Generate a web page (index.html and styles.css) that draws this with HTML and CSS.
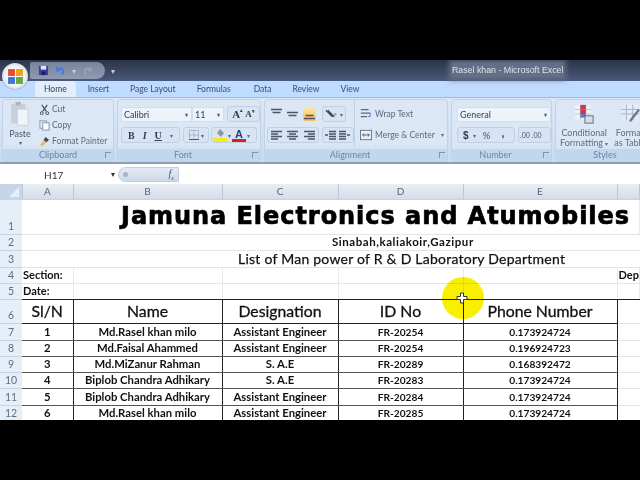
FILE: index.html
```html
<!DOCTYPE html>
<html lang="en">
<head>
    <meta charset="UTF-8">
    <title>Rasel khan - Microsoft Excel</title>
    <link rel="stylesheet" href="styles.css">
</head>
<body>
    <div class="window">
        <!-- title bar -->
        <div class="titlebar">
            <div class="qat">
                <svg class="qat-icon" viewBox="0 0 12 12"><rect x="1" y="1" width="10" height="10" fill="#3a3f9e"/><rect x="3" y="1" width="6" height="4" fill="#e4e8f6"/><rect x="4" y="7" width="4" height="4" fill="#1d2060"/></svg>
                <svg class="qat-icon" viewBox="0 0 12 12"><path d="M2 2v4h4M2 6c2-3 7-3 7 1 0 2-1 3-2 3" fill="none" stroke="#4a78e0" stroke-width="2"/></svg>
                <span class="qat-drop">&#9662;</span>
                <svg class="qat-icon" viewBox="0 0 12 12"><path d="M10 2v4H6M10 6C8 3 3 3 3 7c0 2 1 3 2 3" fill="none" stroke="#9aa4b4" stroke-width="1.5"/></svg>
            </div>
            <span class="qat-more">&#9662;</span>
            <div class="title">Rasel khan - Microsoft Excel</div>
        </div>
        <div class="office-btn">
            <svg viewBox="0 0 16 16" width="17" height="17">
                <rect x="1" y="1" width="6.5" height="6.5" fill="#e2522a"/>
                <rect x="8.5" y="1" width="6.5" height="6.5" fill="#f2a01e"/>
                <rect x="1" y="8.5" width="6.5" height="6.5" fill="#3b78d8"/>
                <rect x="8.5" y="8.5" width="6.5" height="6.5" fill="#6aa83a"/>
            </svg>
        </div>

        <!-- tabs -->
        <div class="tabs">
            <span class="tab active">Home</span>
            <span class="tab">Insert</span>
            <span class="tab">Page Layout</span>
            <span class="tab">Formulas</span>
            <span class="tab">Data</span>
            <span class="tab">Review</span>
            <span class="tab">View</span>
        </div>

        <!-- ribbon -->
        <div class="ribbon">
            <section class="group g-clipboard">
                <div class="group-body clip">
                    <div class="paste">
                        <svg viewBox="0 0 24 30" width="22" height="27"><rect x="2" y="3" width="16" height="22" rx="1" fill="#c9ced6"/><rect x="7" y="1" width="6" height="4" fill="#aab0ba"/><path d="M9 9h12v18H9z" fill="#f4f6fa" stroke="#c6ccd6"/></svg>
                        <span>Paste</span>
                        <span class="caret">&#9662;</span>
                    </div>
                    <div class="clip-list">
                        <div class="clip-row"><svg viewBox="0 0 12 12" width="11" height="11"><path d="M3 1l5 7M9 1L4 8" stroke="#445" stroke-width="1.2"/><circle cx="3" cy="10" r="1.6" fill="none" stroke="#445"/><circle cx="9" cy="10" r="1.6" fill="none" stroke="#445"/></svg>Cut</div>
                        <div class="clip-row"><svg viewBox="0 0 12 12" width="11" height="11"><rect x="1" y="1" width="7" height="8" fill="#eef2f8" stroke="#7f93b0"/><rect x="4" y="3" width="7" height="8" fill="#f8fafc" stroke="#7f93b0"/></svg>Copy</div>
                        <div class="clip-row"><svg viewBox="0 0 12 12" width="11" height="11"><path d="M7 1l4 3-3 3-3-3z" fill="#4a4a52"/><path d="M5 5l3 2-4 4-3-1z" fill="#e6c04a"/></svg>Format Painter</div>
                    </div>
                </div>
                <div class="group-label">Clipboard<i class="launcher"></i></div>
            </section>

            <section class="group g-font">
                <div class="group-body stack">
                    <div class="line">
                        <span class="combo font-name">Calibri<b>&#9662;</b></span>
                        <span class="combo font-size">11<b>&#9662;</b></span>
                        <span class="btns grow-btns"><em class="big">A<sup>&#9652;</sup></em><em class="small">A<sup>&#9662;</sup></em></span>
                    </div>
                    <div class="line">
                        <span class="btns style-btns"><em class="b">B</em><em class="i">I</em><em class="u">U</em><small>&#9662;</small></span>
                        <span class="btns border-btn"><svg viewBox="0 0 10 10" width="10" height="10"><path d="M.5.5h9v9h-9zM5 .5v9M.5 5h9" fill="none" stroke="#8b97a8" stroke-dasharray="1 1"/><path d="M0 9.5h10" stroke="#556"/></svg><small>&#9662;</small></span>
                        <span class="btns color-btns">
                            <span class="swatch fill"><svg viewBox="0 0 12 9" width="12" height="9"><path d="M6 0l4 4-3 4-4-4z" fill="#8d97a6"/></svg></span><small>&#9662;</small>
                            <span class="swatch text"><span>A</span></span><small>&#9662;</small>
                        </span>
                    </div>
                </div>
                <div class="group-label">Font<i class="launcher"></i></div>
            </section>

            <section class="group g-align">
                <div class="group-body align">
                    <div class="stack">
                        <div class="line">
                            <span class="btns icon-btns plain">
                                <em><svg class="ico" viewBox="0 0 11 12"><path d="M0 1.5h11M1.5 4.5h8"/></svg></em>
                                <em><svg class="ico" viewBox="0 0 11 12"><path d="M0 4.5h11M1.5 7.5h8"/></svg></em>
                                <em class="on"><svg class="ico" viewBox="0 0 11 12"><path d="M1.5 7.5h8M0 10.5h11"/></svg></em>
                            </span>
                            <span class="btns orient"><svg viewBox="0 0 14 10" width="14" height="10"><path d="M1 1l7 7M3 1l7 7" stroke="#444c5a" stroke-width="1.4"/><path d="M10 4l3 1-3 2" fill="#7f8aa0"/></svg><small>&#9662;</small></span>
                        </div>
                        <div class="line">
                            <span class="btns icon-btns">
                                <em><svg class="ico" viewBox="0 0 11 12"><path d="M0 2.5h11M0 5h7M0 7.5h11M0 10h7"/></svg></em>
                                <em><svg class="ico" viewBox="0 0 11 12"><path d="M0 2.5h11M2 5h7M0 7.5h11M2 10h7"/></svg></em>
                                <em><svg class="ico" viewBox="0 0 11 12"><path d="M0 2.5h11M4 5h7M0 7.5h11M4 10h7"/></svg></em>
                            </span>
                            <span class="btns indent">
                                <em><svg class="ico" viewBox="0 0 11 12"><path d="M4 2.5h7M4 5h7M4 7.5h7M4 10h7M3 6H0"/></svg></em>
                                <em><svg class="ico" viewBox="0 0 11 12"><path d="M0 2.5h7M0 5h7M0 7.5h7M0 10h7M8 6h3"/></svg></em>
                            </span>
                        </div>
                    </div>
                    <div class="wrap-list">
                        <div class="wrap-row"><svg viewBox="0 0 14 12" width="12" height="12"><path d="M1 1h9M1 5h11M1 9h7" stroke="#5d6878" stroke-width="1.5"/><path d="M12 5v4H9" fill="none" stroke="#4a78c0"/></svg>Wrap Text</div>
                        <div class="wrap-row"><svg viewBox="0 0 14 12" width="12" height="12"><rect x=".5" y=".5" width="13" height="11" fill="#eef2f8" stroke="#5d6878"/><path d="M3 6h8M5 4L3 6l2 2M9 4l2 2-2 2" fill="none" stroke="#33507a"/></svg>Merge &amp; Center<small>&#9662;</small></div>
                    </div>
                </div>
                <div class="group-label">Alignment<i class="launcher"></i></div>
            </section>

            <section class="group g-number">
                <div class="group-body stack">
                    <div class="line"><span class="combo general">General<b>&#9662;</b></span></div>
                    <div class="line">
                        <span class="btns num-btns"><em class="dollar">$</em><small>&#9662;</small><em class="pct">%</em><em class="comma">,</em></span>
                        <span class="btns dec-btns"><em>.00</em><em>.00</em></span>
                    </div>
                </div>
                <div class="group-label">Number<i class="launcher"></i></div>
            </section>

            <section class="group g-styles">
                <div class="group-body styles">
                    <div class="style-item">
                        <svg viewBox="0 0 22 22" width="22" height="20"><rect x="1" y="1" width="18" height="16" fill="#eef2f8"/><path d="M1 6h18M1 11h18M7 1v16M13 1v16" stroke="#b6c3d6"/><rect x="7" y="1" width="6" height="5" fill="#d0344a"/><rect x="7" y="6" width="6" height="5" fill="#d0344a"/><rect x="7" y="11" width="6" height="4" fill="#5a78c8"/><rect x="12" y="13" width="9" height="8" fill="#d8dee8" stroke="#5b6675"/></svg>
                        <span>Conditional<br>Formatting <small>&#9662;</small></span>
                    </div>
                    <div class="style-item">
                        <svg viewBox="0 0 22 22" width="22" height="20"><rect x="1" y="1" width="20" height="17" fill="#e4ebf6"/><path d="M1 6h20M1 11h20M7 1v17M14 1v17" stroke="#9fb2d2"/><path d="M21 6L11 19" stroke="#6d7786" stroke-width="2.5"/></svg>
                        <span>Format<br>as Table</span>
                    </div>
                </div>
                <div class="group-label">Styles</div>
            </section>
        </div>

        <!-- formula bar -->
        <div class="formula-bar">
            <div class="name-box">H17<span>&#9662;</span></div>
            <div class="fx"><i></i><span>f<sub>x</sub></span></div>
            <div class="formula-input"></div>
        </div>

        <!-- sheet -->
        <table class="sheet">
            <colgroup>
                <col class="c-row"><col class="c-a"><col class="c-b"><col class="c-c"><col class="c-d"><col class="c-e"><col class="c-f">
            </colgroup>
            <tr class="r-head">
                <th class="corner"><i></i></th><th>A</th><th>B</th><th>C</th><th>D</th><th>E</th><th></th>
            </tr>
            <tr class="r-title">
                <th class="low">1</th><td colspan="6" class="title-cell">Jamuna Electronics and Atumobiles</td>
            </tr>
            <tr class="r-16">
                <th>2</th><td colspan="6" class="sub-cell">Sinabah,kaliakoir,Gazipur</td>
            </tr>
            <tr class="r-17">
                <th>3</th><td colspan="6" class="list-cell">List of Man power of R &amp; D Laboratory Department</td>
            </tr>
            <tr class="r-16">
                <th>4</th><td class="label">Section:</td><td></td><td></td><td></td><td></td><td class="label">Dep</td>
            </tr>
            <tr class="r-16 r-before-head">
                <th>5</th><td class="label">Date:</td><td></td><td></td><td></td><td></td><td></td>
            </tr>
            <tr class="r-columns">
                <th class="low">6</th><td>Sl/N</td><td>Name</td><td>Designation</td><td>ID No</td><td>Phone Number</td><td></td>
            </tr>
            <tr class="r-data r-17"><th>7</th><td>1</td><td>Md.Rasel khan milo</td><td>Assistant Engineer</td><td>FR-20254</td><td>0.173924724</td><td></td></tr>
            <tr class="r-data r-16"><th>8</th><td>2</td><td>Md.Faisal Ahammed</td><td>Assistant Engineer</td><td>FR-20254</td><td>0.196924723</td><td></td></tr>
            <tr class="r-data r-16"><th>9</th><td>3</td><td>Md.MiZanur Rahman</td><td>S. A.E</td><td>FR-20289</td><td>0.168392472</td><td></td></tr>
            <tr class="r-data r-16"><th>10</th><td>4</td><td>Biplob Chandra Adhikary</td><td>S. A.E</td><td>FR-20283</td><td>0.173924724</td><td></td></tr>
            <tr class="r-data r-17"><th>11</th><td>5</td><td>Biplob Chandra Adhikary</td><td>Assistant Engineer</td><td>FR-20284</td><td>0.173924724</td><td></td></tr>
            <tr class="r-data r-16"><th>12</th><td>6</td><td>Md.Rasel khan milo</td><td>Assistant Engineer</td><td>FR-20285</td><td>0.173924724</td><td></td></tr>
        </table>

        <!-- recorder cursor highlight -->
        <div class="cursor-spot"></div>
        <svg class="cursor-cross" viewBox="0 0 12 12" width="12" height="12"><path d="M4.5 1h3v3.5H11v3H7.5V11h-3V7.5H1v-3h3.5z" fill="#fff" stroke="#333"/></svg>
    </div>
</body>
</html>
```

FILE: styles.css
```css
body {
    margin: 0;
    width: 640px;
    height: 480px;
    background-color: #000;
    overflow: hidden;
    font-family: "Lato", "Liberation Sans", sans-serif;
}
.window {
    position: relative;
    width: 640px;
    height: 360px;
    margin-top: 60px;
    background-color: #fff;
    overflow: hidden;
}

/* title bar */
.titlebar {
    height: 21px;
    display: flex;
    align-items: center;
    background: linear-gradient(#2b3448, #4a5a7a);
    position: relative;
}
.qat {
    margin-left: 30px;
    width: 75px;
    height: 17px;
    display: flex;
    align-items: center;
    gap: 6px;
    padding-left: 8px;
    box-sizing: border-box;
    background: linear-gradient(#77849a, #8f9bb0);
    border-radius: 2px 9px 9px 2px;
}
.qat-icon {
    width: 11px;
    height: 11px;
}
.qat-drop, .qat-more {
    color: #c4cedc;
    font-size: 8px;
}
.qat-more {
    margin-left: 6px;
}
.title {
    position: absolute;
    left: 452px;
    top: 3px;
    font-family: "Liberation Sans", sans-serif;
    font-size: 8.8px;
    line-height: 14px;
    color: #dfe3ea;
    background-color: #626f86;
    box-shadow: 0 0 5px 3px #626f86;
}
.office-btn {
    position: absolute;
    left: 2px;
    top: 3px;
    width: 26px;
    height: 26px;
    border-radius: 50%;
    background: radial-gradient(circle, #f6f7fa 50%, #a9b6c8 100%);
    display: flex;
    align-items: center;
    justify-content: center;
    box-shadow: 0 0 1px #2b3242;
}

/* tabs */
.tabs {
    height: 16px;
    padding-left: 35px;
    display: flex;
    background-color: #bfdbff;
    font-size: 8.5px;
    color: #3a5070;
}
.tab {
    padding: 0 9px;
    line-height: 16px;
    white-space: nowrap;
}
.tab + .tab {
    margin-left: 3px;
}
.tab:nth-child(5) {
    margin-left: 5px;
}
.tab.active {
    background-color: #e4eefa;
    border-radius: 3px 3px 0 0;
    color: #2f3f5a;
}

/* ribbon */
.ribbon {
    height: 67px;
    display: flex;
    gap: 3px;
    padding: 1px 0 0 2px;
    box-sizing: border-box;
    background: linear-gradient(#dbe8f8, #c8dbf2);
    border-top: 1px solid #9db9dc;
    border-bottom: 2px solid #8f9eb0;
    font-size: 9px;
    color: #44546a;
    overflow: hidden;
}
.group {
    display: flex;
    flex-direction: column;
    flex-shrink: 0;
    background: linear-gradient(#dce7f5 70%, #c5d8ef);
    border-radius: 3px;
    border: 1px solid #c2d3e8;
    box-sizing: border-box;
}
.group-body {
    flex: 1;
    min-height: 0;
}
.group-label {
    position: relative;
    height: 12px;
    line-height: 12px;
    text-align: center;
    color: #6d85a3;
    background-color: #c2d6ee;
    font-size: 9px;
}
.g-font .group-label, .g-align .group-label, .g-number .group-label {
    padding-right: 12px;
}
.launcher {
    position: absolute;
    right: 2px;
    top: 3px;
    width: 5px;
    height: 5px;
    border: 1px solid #7f93ad;
    border-width: 1px 0 0 1px;
}
.g-clipboard { width: 112px; }
.g-font { width: 144px; }
.g-align { width: 184px; }
.g-number { width: 101px; }
.g-styles { width: 100px; }

.clip {
    display: flex;
    padding: 1px 0 0 5px;
    gap: 7px;
}
.paste {
    width: 24px;
    display: flex;
    flex-direction: column;
    align-items: center;
    color: #4a5a70;
    line-height: 10px;
}
.paste svg {
    margin-bottom: 1px;
    opacity: .9;
}
.caret {
    font-size: 6px;
    line-height: 7px;
}
.clip-list {
    display: flex;
    flex-direction: column;
}
.clip-row {
    display: flex;
    align-items: center;
    gap: 2px;
    height: 16.5px;
    white-space: nowrap;
    color: #5a6a80;
    font-size: 8.5px;
}
.stack {
    display: flex;
    flex-direction: column;
    gap: 5px;
    padding: 6px 0 0 3px;
}
.line {
    display: flex;
    align-items: center;
    gap: 3px;
    height: 16px;
}
.combo {
    display: flex;
    align-items: center;
    justify-content: space-between;
    height: 15px;
    padding: 0 3px 0 2px;
    box-sizing: border-box;
    background-color: #edf3fb;
    border: 1px solid #d2deed;
    color: #33415a;
    font-size: 9px;
}
.combo b {
    font-size: 6px;
    color: #5a6a80;
}
.font-name { width: 71px; }
.font-size { width: 32px; margin-left: -3px; }
.general { width: 94px; }
.btns {
    display: flex;
    align-items: center;
    height: 16px;
    padding: 0 2px;
    box-sizing: border-box;
    gap: 2px;
    background-color: #d8e4f3;
    border: 1px solid #c0d0e4;
    border-radius: 3px;
}
.btns em {
    font-style: normal;
    display: flex;
    align-items: center;
    justify-content: center;
    color: #333c4c;
}
.btns small {
    font-size: 6px;
    color: #5a6a80;
}
.grow-btns { width: 33px; justify-content: center; }
.big { font: bold 11px "Liberation Serif", serif; }
.small { font: bold 9px "Liberation Serif", serif; }
.btns sup { font-size: 5px; align-self: flex-start; line-height: 6px; }
.style-btns { width: 59px; gap: 8px; padding-left: 6px; }
.style-btns em { font: bold 10px "Liberation Serif", serif; }
.style-btns .i { font-style: italic; }
.style-btns .u { text-decoration: underline; }
.border-btn { width: 26px; padding-left: 5px; }
.color-btns { width: 46px; padding: 0 0 0 1px; gap: 1px; margin-left: -1px; }
.swatch {
    width: 14px;
    height: 13px;
    display: flex;
    align-items: flex-start;
    justify-content: center;
    box-sizing: border-box;
}
.swatch.fill { border-bottom: 4px solid #f5ea2a; }
.swatch.text {
    border-bottom: 3px solid #d8202c;
    font: bold 11px/10px "Liberation Sans", sans-serif;
    color: #28407a;
}

.align {
    display: flex;
}
.align .stack {
    width: 90px;
    flex-shrink: 0;
    box-sizing: border-box;
    padding: 6px 0 0 2px;
    border-right: 1px solid #c0d0e4;
    height: 46px;
    margin-right: 5px;
}
.icon-btns { gap: 3px; width: 52px; }
.icon-btns.plain { border-color: transparent; background: none; }
.icon-btns em {
    width: 14px;
    height: 14px;
}
.icon-btns em.on {
    background: linear-gradient(#fde9a8, #fbbd5a);
    border-radius: 2px;
}
.orient { width: 24px; }
.indent { width: 32px; gap: 3px; }
.ico {
    width: 11px;
    height: 12px;
    fill: none;
    stroke: #4a5566;
    stroke-width: 1.4;
}

.wrap-list {
    display: flex;
    flex-direction: column;
    gap: 4px;
    padding-top: 5px;
}
.wrap-row {
    display: flex;
    align-items: center;
    gap: 3px;
    height: 17px;
    white-space: nowrap;
    color: #5a6a80;
    font-size: 8.5px;
}
.wrap-row small { font-size: 6px; margin-left: 3px; }

.g-number .stack { padding-left: 5px; }
.num-btns { width: 58px; gap: 4px; padding-left: 5px; }
.dollar { font: bold 10px "Liberation Sans", sans-serif; }
.pct { font-size: 10px; color: #4a5a70 !important; margin-left: 3px; }
.comma { font: bold 10px "Liberation Sans", sans-serif; margin-left: 7px; margin-top: -3px; }
.dec-btns { width: 33px; gap: 2px; padding: 0 1px; }
.dec-btns em { font-size: 7px; color: #4a5a70; }

.styles {
    display: flex;
    gap: 6px;
    padding-left: 4px;
}
.style-item {
    display: flex;
    flex-direction: column;
    align-items: center;
    text-align: center;
    padding-top: 4px;
    color: #5a6e8a;
    line-height: 10px;
    white-space: nowrap;
    gap: 4px;
}
.style-item small { font-size: 6px; }

/* formula bar */
.formula-bar {
    height: 19px;
    margin-top: 1px;
    display: flex;
    align-items: center;
    background-color: #fff;
    font-size: 10px;
    color: #333;
}
.name-box {
    width: 118px;
    flex-shrink: 0;
    box-sizing: border-box;
    display: flex;
    justify-content: space-between;
    padding: 0 3px 0 44px;
}
.name-box span { font-size: 8px; }
.fx {
    width: 61px;
    height: 15px;
    flex-shrink: 0;
    display: flex;
    align-items: center;
    justify-content: space-between;
    box-sizing: border-box;
    padding: 0 4px 0 4px;
    background: linear-gradient(#e4ebf5, #cdd9e8);
    border-radius: 8px 0 0 8px;
    border: 1px solid #c2cede;
    font: italic 10px "Liberation Serif", serif;
    color: #4a5566;
}
.fx i {
    width: 5px;
    height: 5px;
    border-radius: 50%;
    background-color: #a8b4c4;
}
.fx sub { font-size: 6px; }

/* sheet */
.sheet {
    table-layout: fixed;
    width: 640px;
    border-collapse: collapse;
    font-family: "Lato", "Liberation Sans", sans-serif;
    color: #111;
}
.sheet th, .sheet td {
    padding: 0;
    overflow: hidden;
    white-space: nowrap;
    text-align: center;
    line-height: 12px;
}
.sheet td {
    border-right: 1px solid #e8e9ec;
    border-bottom: 1px solid #e4e5e8;
    font-size: 11.3px;
    font-weight: 700;
}
.sheet th {
    background-color: #e6eef8;
    color: #5a6f8c;
    font-weight: 400;
    font-size: 10.5px;
    border-bottom: 1px solid #c8d4e4;
    vertical-align: middle;
}
.sheet th.low {
    vertical-align: bottom;
    padding-bottom: 2px;
}
.c-row { width: 22px; }
.c-a { width: 51px; }
.c-b { width: 149px; }
.c-c { width: 116px; }
.c-d { width: 125px; }
.c-e { width: 154px; }

.r-head { height: 15px; }
.r-head th {
    background: linear-gradient(#e9eef5, #d3dce8);
    border-right: 1px solid #bcc8d8;
    color: #56657a;
    font-size: 10px;
}
.corner {
    position: relative;
    background: #c6d5e8 !important;
}
.corner i {
    position: absolute;
    right: 3px;
    bottom: 2px;
    border-style: solid;
    border-width: 0 0 10px 10px;
    border-color: transparent transparent #e6eef8 transparent;
}
.r-title { height: 35px; }
.r-16 { height: 16px; }
.r-17 { height: 17px; }
.r-columns { height: 24px; }
.title-cell {
    font-family: "DejaVu Sans", sans-serif;
    font-size: 24px !important;
    font-weight: 700;
    line-height: 28px !important;
    letter-spacing: 0.95px;
    color: #000;
    -webkit-text-stroke: 0.7px #000;
    text-align: left !important;
    padding: 0 0 1px 99px !important;
}
.sub-cell {
    text-align: left !important;
    text-indent: 310px;
    font-size: 11.5px !important;
    letter-spacing: 0.55px;
    border-right: none !important;
}
.list-cell {
    text-align: left !important;
    text-indent: 216px;
    font-size: 14px !important;
    font-weight: 400 !important;
    letter-spacing: 0.24px;
    -webkit-text-stroke: 0.25px #111;
    border-right: none !important;
}
.sheet td.label {
    text-align: left;
    padding-left: 1px;
    font-size: 11px;
}
.r-before-head td {
    border-bottom: 1px solid #222;
}
.r-columns td, .r-data td {
    border-right: 1px solid #222;
    border-bottom: 1px solid #555;
}
.r-columns td {
    font-size: 15.8px;
    font-weight: 400;
    -webkit-text-stroke: 0.3px #111;
    border-bottom: 1px solid #222;
}
.r-data td:nth-child(5), .r-data td:nth-child(6) {
    font-size: 10.2px;
}
.r-data td:last-child, .r-columns td:last-child {
    border-right: none;
    border-bottom-color: #e4e5e8;
}

/* recorder cursor highlight */
.cursor-spot {
    position: absolute;
    left: 442px;
    top: 217px;
    width: 42px;
    height: 42px;
    border-radius: 50%;
    background-color: #f8f000;
    mix-blend-mode: multiply;
}
.cursor-cross {
    position: absolute;
    left: 456px;
    top: 232px;
}
```
